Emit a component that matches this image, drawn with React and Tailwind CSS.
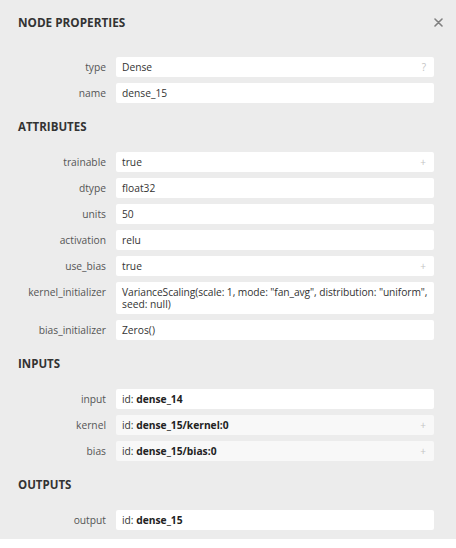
import React from 'react';

const font = { fontFamily: '"Open Sans", "Noto Sans", sans-serif' };

const Mark = ({ children }) => (
    <span className="absolute right-[8px] top-[4px] text-[10px] leading-[12px] text-[#c4c4c4]">{children}</span>
);

const Row = ({ label, children, mark, dim }) => (
    <div className="flex items-start gap-[10px]">
        <div className="w-[88px] shrink-0 text-right text-[10.25px] leading-[12px] pt-[4px] text-[#555]">{label}</div>
        <div className={`relative w-[318px] min-h-[20px] rounded-[2px] pl-[6px] pr-[2px] py-[4px] text-[10.25px] leading-[12px] text-[#333] ${dim ? 'bg-[#f8f8f8]' : 'bg-white'}`}>
            {children}
            {mark && <Mark>{mark}</Mark>}
        </div>
    </div>
);

const Section = ({ title, children }) => (
    <div className="mt-[16px]">
        <h2 className="text-[11.5px] leading-[16px] font-bold text-[#333] uppercase">{title}</h2>
        <div className="mt-[17px] flex flex-col gap-[6px]">{children}</div>
    </div>
);

const Id = ({ value }) => (
    <span>id: <b className="font-bold text-[#222]">{value}</b></span>
);

export default function App() {
    return (
        <div className="w-[456px] h-[548px] bg-white" style={font}>
            <div className="bg-[#ececec] pl-[18px] pt-[14px] pb-[9px]">
                <div className="flex items-start justify-between pr-[13px]">
                    <h1 className="text-[11.75px] leading-[16px] font-bold text-[#333]">NODE PROPERTIES</h1>
                    <svg width="9" height="9" viewBox="0 0 9 9" className="mt-[4px]">
                        <path d="M1 1L8 8M8 1L1 8" stroke="#808080" strokeWidth="1.6" strokeLinecap="round" />
                    </svg>
                </div>
                <div className="mt-[27px] flex flex-col gap-[6px]">
                    <Row label="type" mark="?">Dense</Row>
                    <Row label="name">dense_15</Row>
                </div>
                <Section title="Attributes">
                    <Row label="trainable" mark="+">true</Row>
                    <Row label="dtype">float32</Row>
                    <Row label="units">50</Row>
                    <Row label="activation">relu</Row>
                    <Row label="use_bias" mark="+">true</Row>
                    <Row label="kernel_initializer">
                        <span className="whitespace-nowrap tracking-[-0.08px]">VarianceScaling(scale: 1, mode: "fan_avg", distribution: "uniform",</span>
                        <br />
                        seed: null)
                    </Row>
                    <Row label="bias_initializer">Zeros()</Row>
                </Section>
                <Section title="Inputs">
                    <Row label="input"><Id value="dense_14" /></Row>
                    <Row label="kernel" mark="+" dim><Id value="dense_15/kernel:0" /></Row>
                    <Row label="bias" mark="+" dim><Id value="dense_15/bias:0" /></Row>
                </Section>
                <Section title="Outputs">
                    <Row label="output"><Id value="dense_15" /></Row>
                </Section>
            </div>
        </div>
    );
}
